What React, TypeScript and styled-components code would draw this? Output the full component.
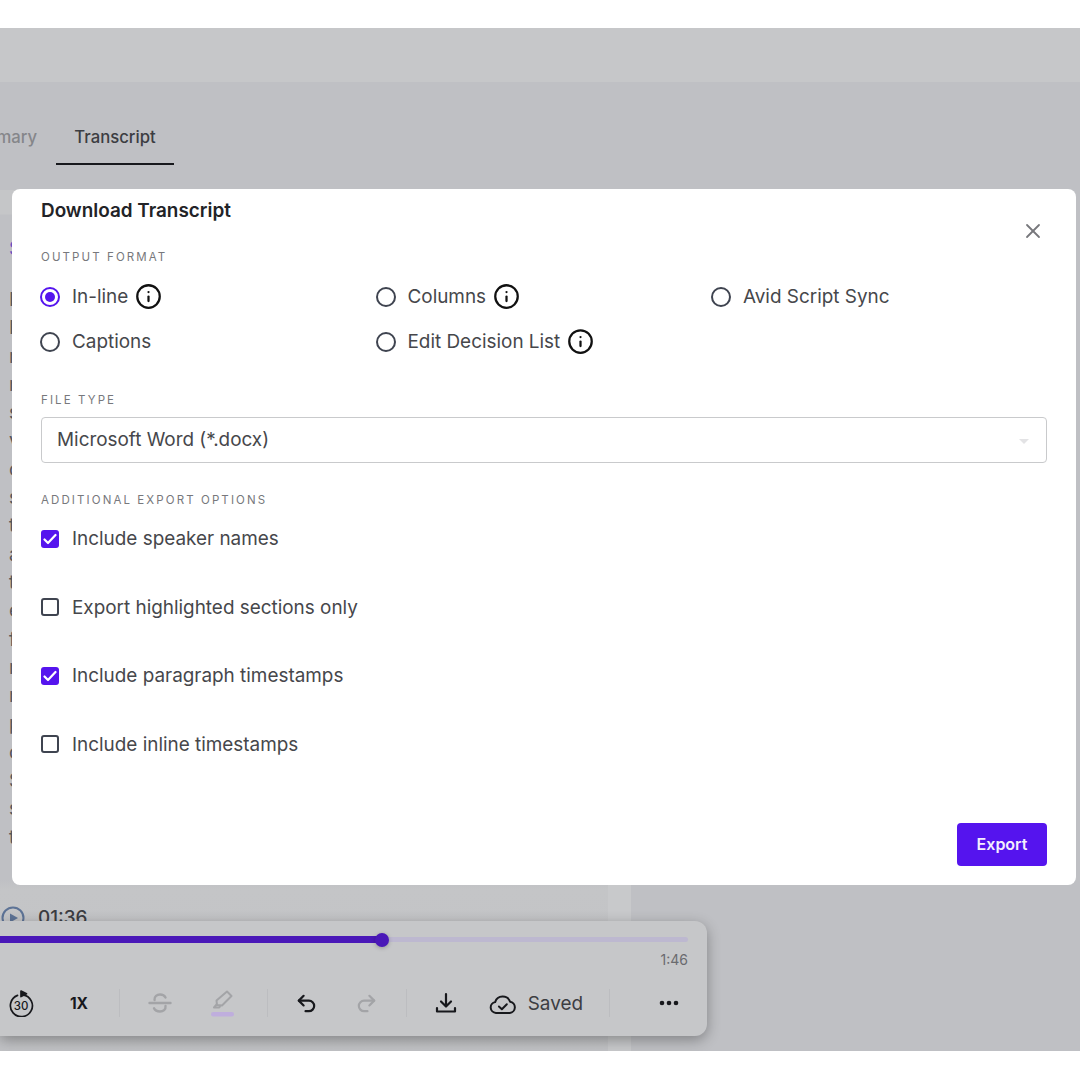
import React from 'react';
import styled, { createGlobalStyle } from 'styled-components';
import { Info, Redo2, Undo2, X } from 'lucide-react';

const GlobalStyle = createGlobalStyle`
  html, body {
    margin: 0;
    padding: 0;
    background: #fff;
    font-family: Inter, "Liberation Sans", sans-serif;
    overflow: hidden;
  }
  * { box-sizing: border-box; }
`;

const Page = styled.div`
  position: relative;
  width: 1080px;
  height: 1080px;
  padding-top: 28px;
  overflow: hidden;
`;

const Screen = styled.div`
  position: relative;
  display: flex;
  flex-direction: column;
  height: 1023px;
  background: #bfc0c4;
  overflow: hidden;
`;

const TopBar = styled.div`
  height: 54px;
  flex: none;
  background: #c6c7c9;
`;

const Tabs = styled.div`
  height: 108px;
  flex: none;
  display: flex;
  align-items: flex-start;
  margin-left: -48px;
`;

const Tab = styled.div<{ $active?: boolean }>`
  width: ${p => (p.$active ? 118 : 94)}px;
  height: 82.500px;
  margin-left: ${p => (p.$active ? 10 : 0)}px;
  padding-top: 43px;
  text-align: center;
  font-size: 16.700px;
  line-height: 24px;
  font-weight: 500;
  color: ${p => (p.$active ? '#3c3d42' : '#85868a')};
  border-bottom: ${p => (p.$active ? '2px solid #17181c' : '0')};
`;

const Body = styled.div`
  flex: 1;
  display: flex;
  min-height: 0;
`;

const Sheet = styled.div`
  width: 608px;
  flex: none;
  padding: 47px 0 0 9px;
  background: linear-gradient(#c5c6c8 0, #c5c6c8 24px, #bfc0c4 25px, #bfc0c4 690px, #c4c5c7 700px, #c1c2c5 100%);
  overflow: hidden;
`;

const SpeakerName = styled.div`
  font-size: 18.900px;
  line-height: 24px;
  color: #6a4fc0;
  margin-bottom: 25px;
`;

const TextLine = styled.div`
  font-size: 18.900px;
  line-height: 28.300px;
  color: #55565a;
  white-space: nowrap;
`;

const Stamp = styled.div`
  display: flex;
  align-items: center;
  gap: 13px;
  margin: 54px 0 0 -8px;
  font-size: 18.900px;
  font-weight: 500;
  color: #3c3d42;
`;

const Gutter = styled.div`
  width: 23px;
  flex: none;
  background: #c8c9cb;
`;

const Dialog = styled.div`
  position: absolute;
  left: 12px;
  top: 161px;
  width: 1064px;
  height: 696px;
  padding: 11px 29px 19px;
  display: flex;
  flex-direction: column;
  background: #fff;
  border-radius: 8px;
`;

const Title = styled.h2`
  margin: 0 0 28px;
  font-size: 18.900px;
  line-height: 22px;
  font-weight: 600;
  color: #222327;
`;

const CloseButton = styled.div`
  position: absolute;
  top: 28px;
  right: 29px;
  width: 28px;
  height: 28px;
  color: #77787c;
  display: flex;
  align-items: center;
  justify-content: center;
`;

const Label = styled.div`
  font-size: 11.500px;
  line-height: 14px;
  letter-spacing: 2.100px;
  color: #77787c;
`;

const RadioGrid = styled.div`
  display: grid;
  grid-template-columns: repeat(3, 335.500px);
  grid-auto-rows: 45px;
  margin: 10px 0 0 -1px;
`;

const Option = styled.div`
  display: flex;
  align-items: center;
  height: 45px;
  font-size: 18.900px;
  color: #46474b;
`;

const RadioDot = styled.span<{ $on?: boolean }>`
  width: 20px;
  height: 20px;
  flex: none;
  margin-right: 12px;
  border-radius: 50%;
  border: 2px solid ${p => (p.$on ? '#5514ee' : '#3f4450')};
  display: flex;
  align-items: center;
  justify-content: center;
  &::after {
    content: '';
    display: ${p => (p.$on ? 'block' : 'none')};
    width: 10px;
    height: 10px;
    border-radius: 50%;
    background: #5514ee;
  }
`;

const InfoMark = styled.span`
  display: flex;
  margin-left: 7px;
  color: #111;
`;

const SectionLabel = styled(Label)<{ $top: number }>`
  margin-top: ${p => p.$top}px;
`;

const Select = styled.div`
  position: relative;
  height: 46px;
  margin-top: 10px;
  padding: 0 0 1px 15px;
  display: flex;
  align-items: center;
  border: 1px solid #c9cacc;
  border-radius: 4px;
  font-size: 18.900px;
  color: #46474b;
  &::after {
    content: '';
    position: absolute;
    right: 17px;
    top: 21px;
    border: 5px solid transparent;
    border-top: 5px solid #e3e3e5;
    border-bottom: 0;
  }
`;

const CheckList = styled.div`
  display: flex;
  flex-direction: column;
  gap: 44.500px;
  margin-top: 19.500px;
`;

const CheckRow = styled.div`
  display: flex;
  align-items: center;
  height: 24px;
  font-size: 18.900px;
  color: #46474b;
`;

const Box = styled.span<{ $on?: boolean }>`
  width: 18px;
  height: 18px;
  flex: none;
  margin-right: 13px;
  border-radius: 3px;
  border: ${p => (p.$on ? '0' : '2px solid #3f4450')};
  background: ${p => (p.$on ? '#5514ee' : '#fff')};
  display: flex;
  align-items: center;
  justify-content: center;
`;

const Footer = styled.div`
  margin-top: auto;
  display: flex;
  justify-content: flex-end;
`;

const ExportButton = styled.button`
  width: 90px;
  height: 43px;
  padding: 0 0 2px;
  border: 0;
  border-radius: 4px;
  background: #5514ee;
  color: #f3eefe;
  font-family: inherit;
  font-size: 16px;
  font-weight: 600;
`;

const Player = styled.div`
  position: absolute;
  left: 0;
  top: 893px;
  width: 707px;
  height: 115px;
  background: #c6c7c9;
  border-radius: 0 12px 12px 0;
  box-shadow: 0 4px 14px rgba(0, 0, 0, 0.32);
`;

const Track = styled.div`
  position: absolute;
  left: 0;
  top: 16px;
  width: 688px;
  height: 5px;
  border-radius: 3px;
  background: #bdb8d0;
`;

const Progress = styled.div`
  position: absolute;
  left: 0;
  top: -1px;
  height: 7px;
  background: #4a18b8;
`;

const Thumb = styled.div`
  position: absolute;
  left: 375px;
  top: -4.500px;
  width: 14px;
  height: 14px;
  border-radius: 50%;
  background: #4a18b8;
  box-shadow: 0 1px 4px rgba(0, 0, 0, 0.25);
`;

const Duration = styled.div`
  position: absolute;
  top: 30px;
  right: 19px;
  font-size: 14px;
  line-height: 18px;
  color: #6a6b6f;
`;

const Toolbar = styled.div`
  position: absolute;
  left: 1px;
  top: 68px;
  height: 28px;
  display: flex;
  align-items: center;
`;

const Group = styled.div<{ $gap: number }>`
  display: flex;
  align-items: center;
  gap: ${p => p.$gap}px;
`;

const ToolButton = styled.div<{ $muted?: boolean }>`
  position: relative;
  width: 40px;
  height: 28px;
  display: flex;
  align-items: center;
  justify-content: center;
  color: ${p => (p.$muted ? '#a3a4a7' : '#17181c')};
  font-size: 15.500px;
  font-weight: 700;
`;

const Divider = styled.div<{ $left: number; $right: number }>`
  width: 1px;
  height: 28px;
  margin: 0 ${p => p.$right}px 0 ${p => p.$left}px;
  background: #bcbdc0;
`;

const SavedState = styled.div`
  display: flex;
  align-items: center;
  gap: 11px;
  width: 94px;
  padding-top: 1px;
  font-size: 18.900px;
  color: #3c3d42;
`;

const RetreatIcon = () => (
  <svg width="26" height="28" viewBox="0 0 26 28" fill="none" stroke="currentColor" strokeWidth="1.700" strokeLinecap="round" strokeLinejoin="round">
    <path d="M9.500 6.400A11 11 0 1 0 15 5.800" />
    <path d="M13 2l5.500 2.800L13 7.600z" fill="currentColor" />
    <text x="13" y="20.500" textAnchor="middle" fontSize="11.500" fontWeight="500" stroke="none" fill="currentColor">30</text>
  </svg>
);

const StrikeIcon = () => (
  <svg width="24" height="24" viewBox="0 0 24 24" fill="none" stroke="currentColor" strokeWidth="2.400" strokeLinecap="round">
    <path d="M1.500 12h21" />
    <path d="M6.500 9C6.200 5.500 9 3.500 12 3.500c2.500 0 4.500 1 5.500 3" />
    <path d="M17.500 15c.5 3.500-2.300 5.500-5.500 5.500-2.700 0-5-1-6-3.200" />
  </svg>
);

const MarkerIcon = () => (
  <svg width="26" height="28" viewBox="0 0 26 28" fill="none" stroke="currentColor" strokeWidth="2" strokeLinejoin="round">
    <path d="M18 2.500l4.500 4.500-9.500 9.500-5-.5-.5-4.500z" />
    <path d="M8 15l-3 3.500h5l1.500-1.500" />
    <rect x="2" y="23" width="23" height="4.500" rx="2.200" fill="#bfaedd" stroke="none" />
  </svg>
);

const TrayIcon = () => (
  <svg width="22" height="22" viewBox="0 0 22 22" fill="none" stroke="currentColor" strokeWidth="2.200" strokeLinecap="round" strokeLinejoin="round">
    <path d="M11 2v12M6 9.500l5 5 5-5" />
    <path d="M2 16v3.500h18V16" />
  </svg>
);

const CloudIcon = () => (
  <svg width="28" height="22" viewBox="0 0 28 22" fill="none" stroke="#17181c" strokeWidth="2" strokeLinecap="round" strokeLinejoin="round">
    <path d="M7 20a5.500 5.500 0 0 1-.8-10.900A8 8 0 0 1 21.300 8.700 5.700 5.700 0 0 1 21 20z" />
    <path d="M10 13.500l3 2.800 5-5" />
  </svg>
);

const DotsIcon = () => (
  <svg width="20" height="6" viewBox="0 0 20 6" fill="currentColor">
    <circle cx="3" cy="3" r="2.300" />
    <circle cx="10" cy="3" r="2.300" />
    <circle cx="17" cy="3" r="2.300" />
  </svg>
);

const PlayCircle = () => (
  <svg width="24" height="24" viewBox="0 0 24 24" fill="none">
    <circle cx="12" cy="12" r="10.500" stroke="#5d7396" strokeWidth="2" />
    <path d="M9 7.500l8 4.500-8 4.500z" fill="#5d7396" />
  </svg>
);

const Tick = () => (
  <svg width="14" height="12" viewBox="0 0 14 12" fill="none" stroke="#fff" strokeWidth="2.200" strokeLinecap="round" strokeLinejoin="round">
    <path d="M1.500 6.500l3.500 3.500 7.500-8" />
  </svg>
);

// only the first letter of each transcript line shows beside the dialog
const sheetLines = ['I', 'F', 'r', 'n', 's', 'v', 'c', 's', 't', 'a', 't', 'e', 'f', 'n', 'n', 'p', 'c', 'S', 's', 't'];

const radioOptions = [
  { label: 'In-line', on: true, info: true },
  { label: 'Columns', info: true },
  { label: 'Avid Script Sync' },
  { label: 'Captions' },
  { label: 'Edit Decision List', info: true },
];

const checkOptions = [
  { label: 'Include speaker names', on: true },
  { label: 'Export highlighted sections only' },
  { label: 'Include paragraph timestamps', on: true },
  { label: 'Include inline timestamps' },
];

const App = (): JSX.Element => (
  <Page>
    <GlobalStyle />
    <Screen>
      <TopBar />
      <Tabs>
        <Tab>Summary</Tab>
        <Tab $active>Transcript</Tab>
      </Tabs>
      <Body>
        <Sheet>
          <SpeakerName>S</SpeakerName>
          {sheetLines.map((line, i) => (
            <TextLine key={i}>{line}</TextLine>
          ))}
          <Stamp>
            <PlayCircle />
            01:36
          </Stamp>
        </Sheet>
        <Gutter />
      </Body>

      <Player>
        <Track>
          <Progress style={{ width: 382 }} />
          <Thumb />
        </Track>
        <Duration>1:46</Duration>
        <Toolbar>
          <Group $gap={18}>
            <ToolButton><RetreatIcon /></ToolButton>
            <ToolButton>1X</ToolButton>
          </Group>
          <Divider $left={20} $right={20} />
          <Group $gap={22}>
            <ToolButton $muted><StrikeIcon /></ToolButton>
            <ToolButton $muted><MarkerIcon /></ToolButton>
          </Group>
          <Divider $left={25} $right={18} />
          <Group $gap={20}>
            <ToolButton><Undo2 size={23} strokeWidth={2.300} /></ToolButton>
            <ToolButton $muted><Redo2 size={23} strokeWidth={2.300} /></ToolButton>
          </Group>
          <Divider $left={20} $right={19} />
          <Group $gap={23}>
            <ToolButton><TrayIcon /></ToolButton>
            <SavedState><CloudIcon />Saved</SavedState>
          </Group>
          <Divider $left={26} $right={39} />
          <ToolButton><DotsIcon /></ToolButton>
        </Toolbar>
      </Player>

      <Dialog>
        <Title>Download Transcript</Title>
        <CloseButton><X size={24} strokeWidth={1.800} /></CloseButton>
        <Label>OUTPUT FORMAT</Label>
        <RadioGrid>
          {radioOptions.map(option => (
            <Option key={option.label}>
              <RadioDot $on={option.on} />
              {option.label}
              {option.info && <InfoMark><Info size={27} strokeWidth={2} /></InfoMark>}
            </Option>
          ))}
        </RadioGrid>
        <SectionLabel $top={29}>FILE TYPE</SectionLabel>
        <Select>Microsoft Word (*.docx)</Select>
        <SectionLabel $top={30}>ADDITIONAL EXPORT OPTIONS</SectionLabel>
        <CheckList>
          {checkOptions.map(option => (
            <CheckRow key={option.label}>
              <Box $on={option.on}>{option.on && <Tick />}</Box>
              {option.label}
            </CheckRow>
          ))}
        </CheckList>
        <Footer>
          <ExportButton>Export</ExportButton>
        </Footer>
      </Dialog>
    </Screen>
  </Page>
);

export default App;
